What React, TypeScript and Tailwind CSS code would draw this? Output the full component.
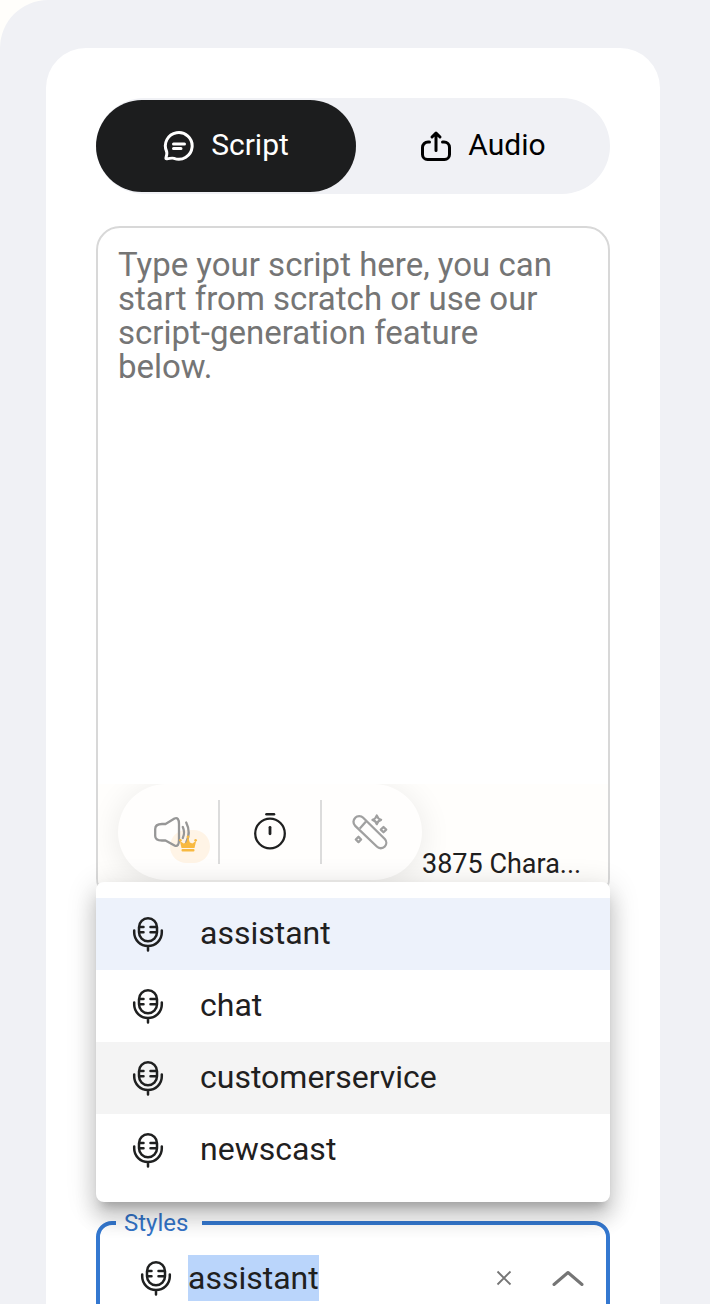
import { useEffect, useRef, useState } from "react";

const STYLES = ["assistant", "chat", "customerservice", "newscast"];

function ScriptIcon() {
  return (
    <svg viewBox="0 0 32 32" className="size-8 shrink-0" fill="none" stroke="currentColor" strokeWidth="3" strokeLinecap="round" strokeLinejoin="round" aria-hidden="true">
      <path d="M3.6 21.500A13.400 13.400 0 1 1 11 28.400C8.500 27.400 5.500 29.200 3 28.500C2.300 28 4.600 25 3.600 21.500Z" />
      <path d="M10.500 14h11M10.500 18.600h7.500" />
    </svg>
  );
}

function UploadIcon() {
  return (
    <svg viewBox="0 0 32 32" className="size-8 shrink-0" fill="none" stroke="currentColor" strokeWidth="3" strokeLinecap="round" strokeLinejoin="round" aria-hidden="true">
      <path d="M9.500 12H8a5.500 5.500 0 0 0-5.500 5.500v7A5 5 0 0 0 7.500 29.500h17a5 5 0 0 0 5-5v-7A5.500 5.500 0 0 0 24 12h-1.500" />
      <path d="M16 20.500V3.500M12 7l4-4 4 4" />
    </svg>
  );
}

function MicIcon() {
  return (
    <svg viewBox="0 0 32 36" className="h-9 w-8 shrink-0" fill="none" stroke="currentColor" strokeWidth="2.500" strokeLinecap="round" aria-hidden="true">
      <rect x="7" y="2.300" width="18" height="23" rx="9" />
      <path d="M2.200 14.500v2a13.800 13.500 0 0 0 27.600 0v-2M16 30v4.500" />
      <path d="M7.500 11h4M7.500 16.200h4M18.500 11h6M18.500 16.200h6" />
    </svg>
  );
}

function SpeakerIcon() {
  return (
    <svg viewBox="0 0 60 48" className="h-12 w-15 shrink-0" fill="none" aria-hidden="true">
      <rect x="20" y="14" width="40" height="33" rx="16.500" fill="#fff4e6" />
      <g stroke="#979797" strokeWidth="2.300" strokeLinecap="round" strokeLinejoin="round">
        <path d="M12 8H15.500L24.500 2.500C27.500 1.200 29 3.500 29 8V24C29 28.500 27.500 31 24.500 29.500L15.500 24.500H12C8 24.500 5.200 23.500 5.200 20V13C5.200 9.500 8 8 12 8Z" />
        <path d="M32.800 11q2.500 5.500 0 11M36.200 6.500q5 10 0 20" />
      </g>
      <g fill="#f8b940">
        <path d="M31.500 32 29.800 24.800 33.600 27.600 36.200 26.600 38 20.500 39.800 26.600 42.400 27.600 46.200 24.800 44.500 32Z" />
        <circle cx="38" cy="20.800" r="1.400" />
        <circle cx="30.400" cy="24.200" r="1.300" />
        <circle cx="45.600" cy="24.200" r="1.300" />
        <rect x="31.500" y="33" width="13" height="2.600" rx="1" />
      </g>
    </svg>
  );
}

function TimerIcon() {
  return (
    <svg viewBox="0 0 36 40" className="h-10 w-9" fill="none" stroke="currentColor" strokeWidth="2.300" strokeLinecap="round" aria-hidden="true">
      <circle cx="18" cy="21.500" r="14.800" />
      <path d="M18 15.300v6.500" strokeWidth="2.800" />
      <path d="M14.500 2.200h7.500" strokeWidth="2.600" />
    </svg>
  );
}

function WandIcon() {
  return (
    <svg viewBox="0 0 36 36" className="size-9" fill="none" stroke="currentColor" strokeWidth="2.300" strokeLinejoin="round" aria-hidden="true">
      <path d="M3.200 11.800a5.500 5.500 0 0 1 0-8 5.500 5.500 0 0 1 8 0L32.800 25a5.500 5.500 0 0 1 0 7.500 5.500 5.500 0 0 1-8 0Z" />
      <path d="M7.800 14.500 14 7.500" />
      <path d="M24.800 1.500q1 3.400 4.300 4.300-3.300 1-4.300 4.300-1-3.300-4.300-4.300 3.300-.9 4.300-4.300ZM31.500 13l2.700 2.600-2.700 2.700-2.700-2.700ZM6.500 22.800l2.600 2.700-2.600 2.600-2.700-2.600Z" />
    </svg>
  );
}

export default function App() {
  const [style, setStyle] = useState("assistant");
  const styleInput = useRef<HTMLInputElement>(null);

  useEffect(() => {
    styleInput.current?.focus({ preventScroll: true });
    styleInput.current?.select();
  }, []);

  return (
    <div className="h-screen overflow-hidden bg-[#fffefb] font-[Roboto,sans-serif] text-[#1f2020]">
      <div className="min-h-full rounded-tl-[48px] bg-[#f0f1f5] pt-12 pr-[50px] pl-[46px]">
        <main className="rounded-t-[40px] bg-white px-[50px] pt-[50px] pb-12">
          <div className="flex h-24 items-center rounded-full bg-[#f0f1f5]">
            <button type="button" aria-pressed="true" className="flex h-[92px] w-[260px] shrink-0 items-center justify-center gap-4 rounded-full bg-[#1c1d1e] text-[30px] text-white">
              <ScriptIcon />
              <span className="pb-1">Script</span>
            </button>
            <button type="button" aria-pressed="false" className="flex h-[92px] flex-1 items-center justify-center gap-4 rounded-full text-[30px] text-black">
              <UploadIcon />
              <span className="pb-1">Audio</span>
            </button>
          </div>

          <section className="mt-8 overflow-hidden rounded-3xl border-2 border-[#d8d8d8]">
            <textarea
              aria-label="Script"
              placeholder="Type your script here, you can start from scratch or use our script-generation feature below."
              className="block h-[556px] w-full resize-none pt-5 pr-8 pl-5 text-[33px] leading-[34px] outline-none placeholder:text-[#757575]"
            />
            <div className="flex items-start overflow-hidden bg-[#fffefc] pr-5 pb-5 pl-5">
              <div className="flex h-24 w-[304px] shrink-0 items-center rounded-full bg-[#fffefd] shadow-[0_4px_32px_rgba(0,0,0,0.09)]">
                <button type="button" aria-label="Read aloud" className="flex h-16 w-[100px] items-center justify-end pt-4 pr-2">
                  <SpeakerIcon />
                </button>
                <button type="button" aria-label="Add pause" className="flex h-16 w-[104px] items-center justify-center border-x-2 border-[#dcdcdc]">
                  <TimerIcon />
                </button>
                <button type="button" aria-label="Generate script" className="flex h-16 flex-1 items-center justify-center pr-1 text-[#a0a0a0]">
                  <WandIcon />
                </button>
              </div>
              <p className="mt-16 whitespace-nowrap text-[27px] leading-8">3875 Chara...</p>
            </div>
          </section>

          <div className="relative mt-[310px]">
            <fieldset className="h-[122px] min-w-0 rounded-2xl border-4 border-[#3478d0] pl-10">
              <legend className="-ml-6 pr-3.5 pl-2 text-2xl leading-[22px] text-[#3474c8]">
                <label htmlFor="style">Styles</label>
              </legend>
              <div className="flex h-[88px] items-center pr-[22px]">
                <MicIcon />
                <input
                  id="style"
                  ref={styleInput}
                  role="combobox"
                  aria-expanded="true"
                  aria-controls="style-options"
                  value={style}
                  onChange={(e) => setStyle(e.target.value)}
                  className="ml-4 h-[46px] min-w-0 flex-1 text-[32px] leading-[46px] caret-transparent outline-none selection:bg-[#bad5fb] selection:text-[#1f2020]"
                />
                <button type="button" aria-label="Clear" onClick={() => setStyle("")} className="mr-10 text-[#757575]">
                  <svg viewBox="0 0 16 16" className="size-4" fill="none" stroke="currentColor" strokeWidth="1.800" aria-hidden="true">
                    <path d="M1.500 1.500l13 13M14.500 1.500l-13 13" />
                  </svg>
                </button>
                <button type="button" aria-label="Close list" className="text-[#757575]">
                  <svg viewBox="0 0 32 16" className="h-4 w-8" fill="none" stroke="currentColor" strokeWidth="3" strokeLinecap="round" strokeLinejoin="round" aria-hidden="true">
                    <path d="M2 14.500 16 2.500l14 12" />
                  </svg>
                </button>
              </div>
            </fieldset>
            <ul id="style-options" role="listbox" aria-label="Styles" className="absolute inset-x-0 bottom-full mb-2.5 rounded-lg bg-white pt-4 pb-4 shadow-[0_10px_10px_-6px_rgba(0,0,0,0.2),0_16px_20px_2px_rgba(0,0,0,0.14),0_6px_28px_4px_rgba(0,0,0,0.12)]">
              {STYLES.map((name) => (
                <li
                  key={name}
                  role="option"
                  aria-selected={name === style}
                  onClick={() => setStyle(name)}
                  className={`flex h-[72px] items-center pl-9 text-[32px] ${name === style ? "bg-[#edf2fb]" : name === "customerservice" ? "bg-[#f4f4f4]" : "bg-white"}`}
                >
                  <MicIcon />
                  <span className="ml-9 pb-0.5">{name}</span>
                </li>
              ))}
            </ul>
          </div>
        </main>
      </div>
    </div>
  );
}
